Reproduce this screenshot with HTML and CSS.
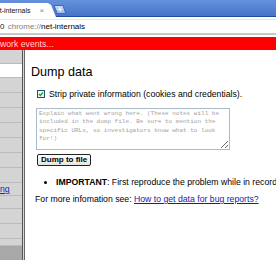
FILE: index.html
```html
<!DOCTYPE html>
<html lang="en">
<head>
    <meta charset="UTF-8">
    <title>net-internals</title>
    <link rel="stylesheet" href="styles.css">
</head>
<body>
    <div class="tabstrip">
        <div class="tab">
            <span class="tab-title">net-internals</span>
            <span class="tab-close">&times;</span>
        </div>
        <div class="newtab">+</div>
    </div>

    <div class="toolbar">
        <div class="omnibox">
            <span class="omni-icon">0</span>
            <span class="scheme">chrome://</span><span class="host">net-internals</span>
        </div>
    </div>

    <div class="capture-bar">work events...</div>

    <div class="main">
        <div class="sidebar">
            <div class="side-row first"></div>
            <div class="side-row selected"></div>
            <div class="side-row"></div>
            <div class="side-row"></div>
            <div class="side-row"></div>
            <div class="side-row"></div>
            <div class="side-row"></div>
            <div class="side-row"></div>
            <div class="side-row"></div>
            <div class="side-row short"><a href="#">ng</a></div>
            <div class="side-row short"></div>
            <div class="side-row"></div>
            <div class="side-row"></div>
            <div class="side-row tiny"></div>
            <div class="side-row bottom"></div>
        </div>
        <div class="splitter"></div>

        <div class="content">
            <h2>Dump data</h2>

            <label class="strip-row">
                <span class="checkbox">
                    <svg width="8" height="8" viewBox="0 0 8 8">
                        <rect x="0.5" y="0.5" width="7" height="7" fill="#f4f4ee" stroke="#1c5180"/>
                        <path d="M2 4 L3.4 5.5 L6 2.4" fill="none" stroke="#21a121" stroke-width="1.4"/>
                    </svg>
                </span>
                Strip private information (cookies and credentials).
            </label>

            <textarea class="notes" placeholder="Explain what went wrong here. (These notes will be included in the dump file. Be sure to mention the specific URLs, so investigators know what to look for!)"></textarea>

            <button class="dump-btn">Dump to file</button>

            <ul class="notes-list">
                <li><b>IMPORTANT</b>: First reproduce the problem while in recording mode</li>
            </ul>

            <p class="more-info">For more infomation see: <a href="#">How to get data for bug reports?</a></p>
        </div>
    </div>
</body>
</html>
```

FILE: styles.css
```css
body {
    margin: 0;
    width: 276px;
    height: 260px;
    overflow: hidden;
    font-family: 'Liberation Sans', Arial, sans-serif;
    font-size: 8.7px;
    background: white;
    color: #000;
}

/* tab strip */
.tabstrip {
    display: flex;
    align-items: flex-end;
    height: 16px;
    border-bottom: 1px solid #1d4d9e;
    background: linear-gradient(#6691dc, #4674c8);
}

.tab {
    display: flex;
    align-items: center;
    flex-shrink: 0;
    width: 56px;
    height: 14px;
    margin-bottom: -1px;
    background: white;
    white-space: nowrap;
    overflow: hidden;
    clip-path: polygon(0 0, 48px 0, 51px 2px, 56px 100%, 0 100%);
}

.tab-title {
    margin-left: -8px;
    font-size: 7px;
    color: #111;
}

.tab-close {
    margin-left: 9px;
    font-size: 8px;
    color: #888;
}

.newtab {
    flex-shrink: 0;
    width: 8px;
    height: 7px;
    margin: 0 0 2px -1px;
    background: linear-gradient(#c8dbf6, #9ab9e8);
    border: 1px solid #3f6bb8;
    border-radius: 1px;
    transform: skewX(20deg);
    color: white;
    font-size: 8px;
    font-weight: bold;
    line-height: 7px;
    text-align: center;
}

/* address bar */
.toolbar {
    height: 18px;
    padding-top: 2px;
    border-bottom: 2px solid #c8c8c8;
    box-sizing: border-box;
}

.omnibox {
    height: 13px;
    border-top: 1px solid #e6e9ef;
    font-size: 8px;
    line-height: 13px;
    white-space: nowrap;
}

.omni-icon {
    margin-right: 1px;
    color: #222;
}

.scheme {
    color: #808080;
}

.host {
    color: #000;
}

/* red capture banner */
.capture-bar {
    height: 13px;
    margin-top: 2px;
    background: #ff0000;
    color: #ffd6d6;
    font-size: 8.7px;
    line-height: 14px;
    white-space: nowrap;
}

/* main area */
.main {
    display: flex;
    height: 210px;
}

.sidebar {
    width: 22px;
    flex-shrink: 0;
    background: #d4d4d4;
    border-right: 1px solid #555;
}

.side-row {
    height: 14px;
    border-bottom: 1px solid #bcbcbc;
    font-size: 8.7px;
    line-height: 13px;
    overflow: hidden;
}

.side-row.first {
    height: 13px;
}

.side-row.selected {
    height: 13px;
    background: white;
}

.side-row.short {
    height: 12px;
}

.side-row.tiny {
    height: 6px;
}

.side-row.bottom {
    height: 20px;
    border-bottom: none;
    background: #a8a8a8;
}

.side-row a {
    color: #2020c0;
}

.splitter {
    width: 1px;
    flex-shrink: 0;
    background: #d8d8d8;
    border-right: 1px solid #666;
}

.content {
    flex: 1;
    padding-left: 10px;
    white-space: nowrap;
    overflow: hidden;
}

.content h2 {
    margin: 15px 0 0 -4px;
    font-size: 12.6px;
    font-weight: normal;
    line-height: 15px;
}

.strip-row {
    display: flex;
    align-items: center;
    gap: 4px;
    margin: 9px 0 0 2px;
    line-height: 10px;
}

.checkbox svg {
    display: block;
}

.notes {
    display: block;
    width: 194px;
    height: 42px;
    margin: 9px 0 0 1px;
    padding: 1px 2px;
    box-sizing: border-box;
    border: 1px solid #a9bacb;
    font-family: 'Liberation Mono', 'Courier New', monospace;
    font-size: 6px;
    line-height: 8.3px;
    white-space: normal;
    resize: both;
}

.notes::placeholder {
    color: #a3a3a3;
}

.dump-btn {
    display: block;
    height: 12px;
    margin: 4px 0 0 2px;
    padding: 0 3px;
    border: 1px solid #222;
    border-radius: 2px;
    background: linear-gradient(#fdfdfd, #e6e6e0);
    font-family: 'Liberation Sans', Arial, sans-serif;
    font-size: 8px;
    font-weight: bold;
    line-height: 10px;
    color: #000;
}

.notes-list {
    margin: 11px 0 0 0;
    padding-left: 21px;
    line-height: 10px;
}

.more-info {
    margin: 7px 0 0 0;
    line-height: 10px;
}

.more-info a {
    color: #1a1aa6;
}
```
